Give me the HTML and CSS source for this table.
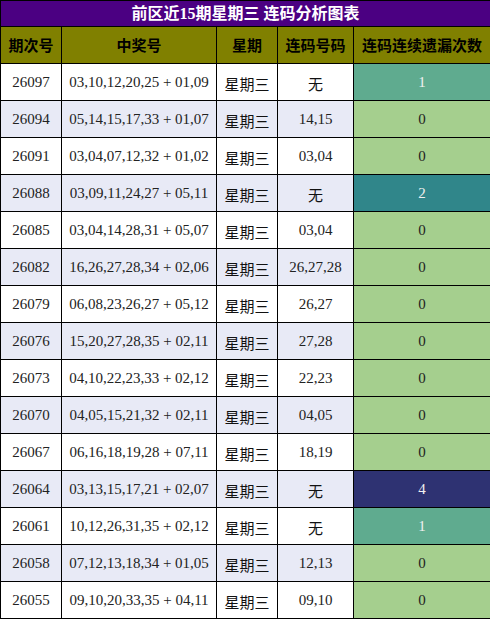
FILE: index.html
```html
<!DOCTYPE html>
<html lang="zh">
<head>
<meta charset="utf-8">
<link rel="stylesheet" href="styles.css">
</head>
<body>
<table class="chart">
  <colgroup>
    <col class="c1"><col class="c2"><col class="c3"><col class="c4"><col class="c5">
  </colgroup>
  <thead>
    <tr class="title"><th colspan="5">前区近15期星期三 连码分析图表</th></tr>
    <tr class="head"><th>期次号</th><th>中奖号</th><th>星期</th><th>连码号码</th><th>连码连续遗漏次数</th></tr>
  </thead>
  <tbody>
    <tr class="odd"><td>26097</td><td>03,10,12,20,25 + 01,09</td><td class="cjk">星期三</td><td class="cjk">无</td><td class="m1">1</td></tr>
    <tr class="even"><td>26094</td><td>05,14,15,17,33 + 01,07</td><td class="cjk">星期三</td><td>14,15</td><td class="m0">0</td></tr>
    <tr class="odd"><td>26091</td><td>03,04,07,12,32 + 01,02</td><td class="cjk">星期三</td><td>03,04</td><td class="m0">0</td></tr>
    <tr class="even"><td>26088</td><td>03,09,11,24,27 + 05,11</td><td class="cjk">星期三</td><td class="cjk">无</td><td class="m2">2</td></tr>
    <tr class="odd"><td>26085</td><td>03,04,14,28,31 + 05,07</td><td class="cjk">星期三</td><td>03,04</td><td class="m0">0</td></tr>
    <tr class="even"><td>26082</td><td>16,26,27,28,34 + 02,06</td><td class="cjk">星期三</td><td>26,27,28</td><td class="m0">0</td></tr>
    <tr class="odd"><td>26079</td><td>06,08,23,26,27 + 05,12</td><td class="cjk">星期三</td><td>26,27</td><td class="m0">0</td></tr>
    <tr class="even"><td>26076</td><td>15,20,27,28,35 + 02,11</td><td class="cjk">星期三</td><td>27,28</td><td class="m0">0</td></tr>
    <tr class="odd"><td>26073</td><td>04,10,22,23,33 + 02,12</td><td class="cjk">星期三</td><td>22,23</td><td class="m0">0</td></tr>
    <tr class="even"><td>26070</td><td>04,05,15,21,32 + 02,11</td><td class="cjk">星期三</td><td>04,05</td><td class="m0">0</td></tr>
    <tr class="odd"><td>26067</td><td>06,16,18,19,28 + 07,11</td><td class="cjk">星期三</td><td>18,19</td><td class="m0">0</td></tr>
    <tr class="even"><td>26064</td><td>03,13,15,17,21 + 02,07</td><td class="cjk">星期三</td><td class="cjk">无</td><td class="m4">4</td></tr>
    <tr class="odd"><td>26061</td><td>10,12,26,31,35 + 02,12</td><td class="cjk">星期三</td><td class="cjk">无</td><td class="m1">1</td></tr>
    <tr class="even"><td>26058</td><td>07,12,13,18,34 + 01,05</td><td class="cjk">星期三</td><td>12,13</td><td class="m0">0</td></tr>
    <tr class="odd"><td>26055</td><td>09,10,20,33,35 + 04,11</td><td class="cjk">星期三</td><td>09,10</td><td class="m0">0</td></tr>
  </tbody>
</table>
</body>
</html>
```

FILE: styles.css
```css
html, body {
  margin: 0;
  padding: 0;
  background: #ffffff;
}

.chart {
  border-collapse: collapse;
  table-layout: fixed;
  width: 490px;
  font-family: "Liberation Serif", "Noto Sans CJK SC", serif;
  font-size: 15px;
  line-height: 18px;
  color: #222;
}

.c1 { width: 61px; }
.c2 { width: 155px; }
.c3 { width: 61px; }
.c4 { width: 76px; }
.c5 { width: 137px; }

.chart th,
.chart td {
  border: 1px solid #000;
  padding: 0;
  text-align: center;
  vertical-align: middle;
}

.title th {
  background: #4b0082;
  color: #ffffff;
  height: 25px;
  font-size: 16px;
  font-weight: bold;
  font-family: "Liberation Serif", "Noto Sans CJK SC", serif;
}

.head th {
  background: #808000;
  color: #000;
  height: 36px;
  font-size: 15px;
  font-weight: bold;
  font-family: "Noto Sans CJK SC", sans-serif;
}

.chart td {
  height: 36px;
}

.odd td { background: #ffffff; }
.even td { background: #e8eaf6; }

.chart td.cjk {
  font-family: "Noto Sans CJK SC", sans-serif;
  font-size: 15px;
  height: 32px;
  padding-top: 4px;
  color: #111;
}

.chart td.m0 { background: #a5cf8e; color: #222; }
.chart td.m1 { background: #5fab8f; color: #f0f0f0; }
.chart td.m2 { background: #30868a; color: #f0f0f0; }
.chart td.m4 { background: #2e3272; color: #f0f0f0; }
```
